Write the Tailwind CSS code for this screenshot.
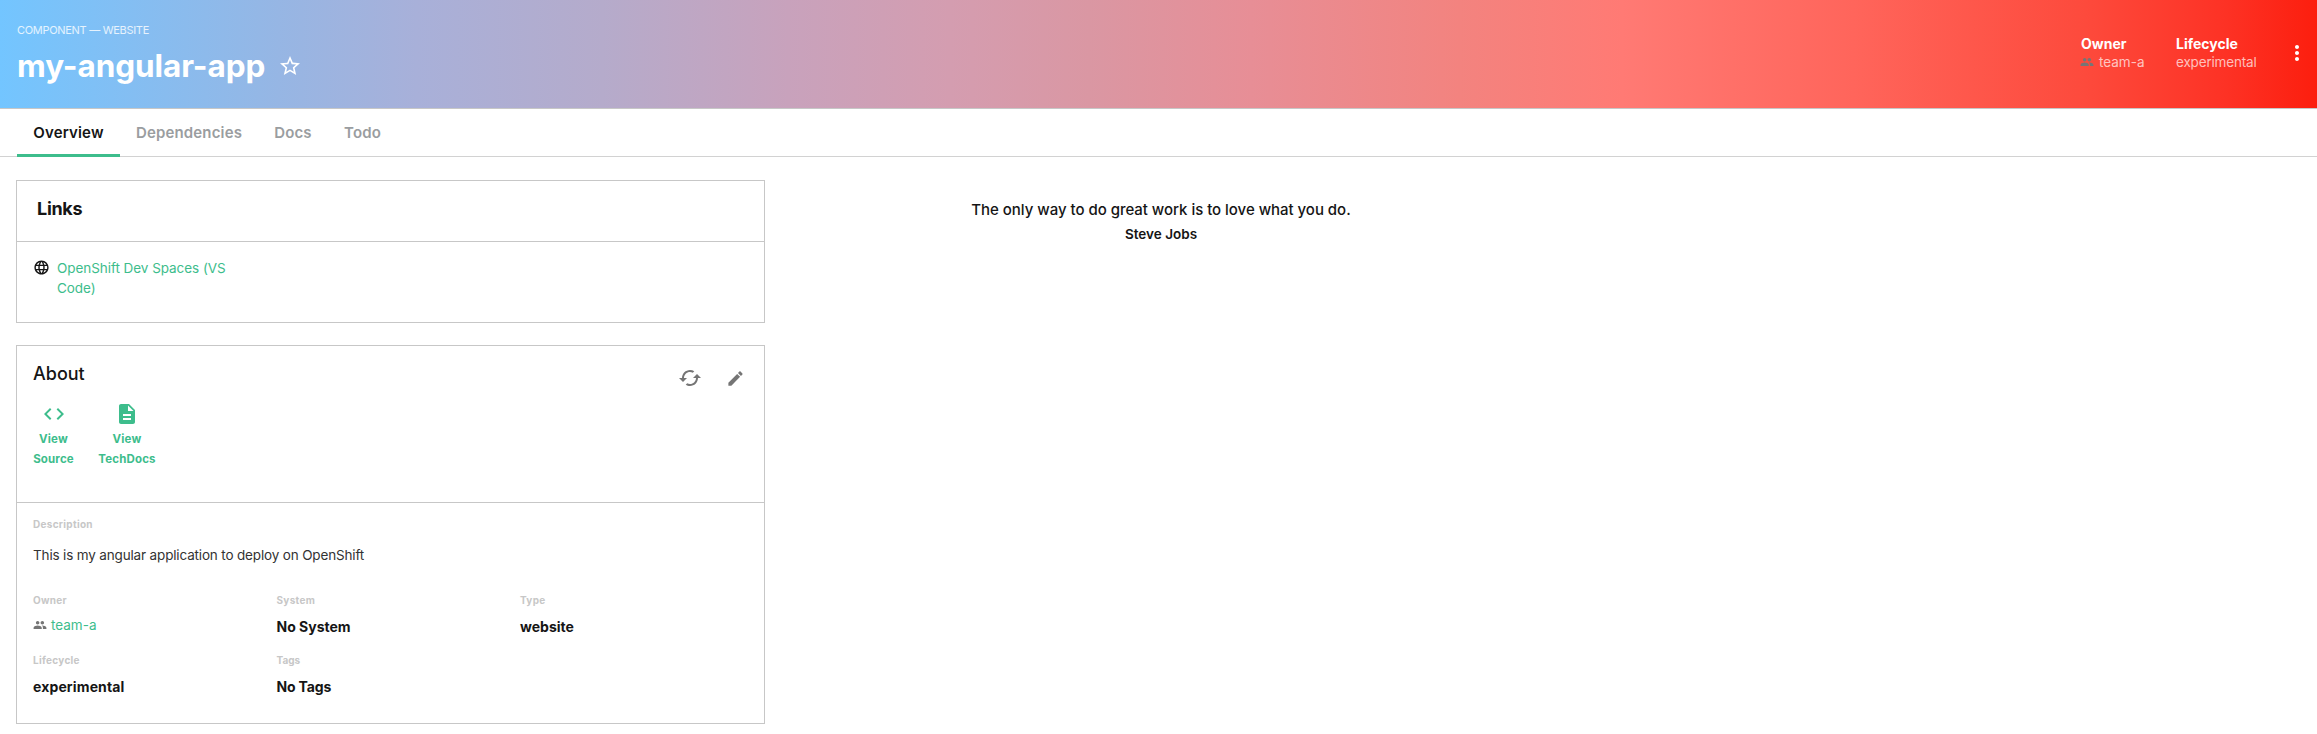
<!DOCTYPE html>
<html lang="en">
<head>
<meta charset="utf-8">
<title>my-angular-app</title>
<script src="https://cdn.jsdelivr.net/npm/@tailwindcss/browser@4"></script>
</head>
<body class="h-[734px] overflow-hidden bg-white font-['Inter',sans-serif] text-[14px] leading-5 text-[#151515]">
<header class="flex h-[109px] justify-between border-b border-[#c7c7c7] bg-[linear-gradient(90deg,#73c5ff_0%,#96b6e4_12%,#a8b0d9_18%,#b5abcb_26%,#c8a2bc_34%,#d49db0_41%,#da97a3_47%,#e78e96_54%,#f3837f_63%,#ff7a74_70%,#ff655b_80%,#fd4a3c_90%,#fd3225_96%,#fc1e0e_100%)] text-white">
  <div class="pt-5 pl-4">
    <p class="pl-px text-[11px] tracking-[-0.3px] text-white/80">COMPONENT — WEBSITE</p>
    <div class="mt-1.5 flex h-10 items-center">
      <h1 class="pl-px text-[31.5px] leading-10 font-bold tracking-[-0.08px]">my-angular-app</h1>
      <svg class="ml-[12.5px] size-6" viewBox="0 0 24 24" fill="currentColor"><path d="M22 9.240l-7.190-.62L12 2 9.190 8.630 2 9.240l5.460 4.730L5.820 21 12 17.270 18.180 21l-1.630-7.030L22 9.240zM12 15.400l-3.760 2.270 1-4.280-3.320-2.880 4.380-.38L12 6.100l1.710 4.040 4.380.38-3.320 2.880 1 4.280L12 15.400z"/></svg>
    </div>
  </div>
  <div class="flex pt-[34px] pr-2">
    <div class="w-24">
      <p class="h-[18px] pl-px leading-[19px] font-bold">Owner</p>
      <p class="flex items-center text-[13.5px] text-white/70"><svg class="mr-[5px] size-[14px] text-[#757575]" viewBox="0 0 24 24" fill="currentColor"><path d="M16 11c1.660 0 2.990-1.340 2.990-3S17.660 5 16 5c-1.660 0-3 1.340-3 3s1.340 3 3 3zm-8 0c1.660 0 2.990-1.340 2.990-3S9.660 5 8 5C6.340 5 5 6.340 5 8s1.340 3 3 3zm0 2c-2.330 0-7 1.170-7 3.500V19h14v-2.500c0-2.330-4.670-3.500-7-3.500zm8 0c-.29 0-.62.02-.97.05 1.160.84 1.970 1.970 1.970 3.450V19h6v-2.500c0-2.330-4.670-3.500-7-3.500z"/></svg>team-a</p>
    </div>
    <div class="w-[109px]">
      <p class="h-[18px] font-bold">Lifecycle</p>
      <p class="text-[13.5px] tracking-[-0.17px] text-white/70">experimental</p>
    </div>
    <svg class="mt-[7px] size-6" viewBox="0 0 24 24" fill="currentColor"><path d="M12 8c1.100 0 2-.9 2-2s-.9-2-2-2-2 .9-2 2 .9 2 2 2zm0 2c-1.100 0-2 .9-2 2s.9 2 2 2 2-.9 2-2-.9-2-2-2zm0 6c-1.100 0-2 .9-2 2s.9 2 2 2 2-.9 2-2-.9-2-2-2z"/></svg>
  </div>
</header>
<nav class="flex h-12 items-start border-b border-[#d2d2d2] pl-[17px] text-[15px] font-semibold tracking-[0.15px] text-[#9a9da0]">
  <a class="flex h-12 w-[103px] items-center justify-center border-b-[3px] border-[#3dbd8c] pt-[3px] text-[#151515]">Overview</a>
  <a class="flex h-[45px] w-[138px] items-center justify-center pt-[3px]">Dependencies</a>
  <a class="flex h-[45px] w-[70px] items-center justify-center pt-[3px]">Docs</a>
  <a class="flex h-[45px] w-[69px] items-center justify-center pt-[3px]">Todo</a>
</nav>
<main class="flex gap-4 pt-[23px] pl-4">
  <div class="flex w-[749px] flex-col gap-[22px]">
    <section class="h-[143px] border border-[#c7c7c7]">
      <div class="h-[61px] border-b border-[#c7c7c7] pt-[15px] pl-5">
        <h2 class="text-[18px] leading-[25px] font-bold tracking-[-0.3px]">Links</h2>
      </div>
      <div class="flex pt-4 pl-[15.5px]">
        <svg class="mt-[0.7px] mr-[7.5px] size-[17px]" viewBox="0 0 24 24" fill="currentColor"><path d="M11.990 2C6.470 2 2 6.480 2 12s4.470 10 9.990 10C17.520 22 22 17.520 22 12S17.520 2 11.990 2zm6.930 6h-2.950c-.32-1.250-.78-2.450-1.380-3.560 1.840.63 3.370 1.910 4.330 3.560zM12 4.040c.83 1.200 1.480 2.530 1.910 3.960h-3.820c.43-1.430 1.080-2.760 1.910-3.960zM4.260 14C4.100 13.360 4 12.690 4 12s.1-1.360.26-2h3.380c-.08.66-.14 1.320-.14 2s.06 1.340.14 2H4.260zm.82 2h2.950c.32 1.250.78 2.450 1.380 3.560-1.840-.63-3.370-1.900-4.330-3.560zm2.950-8H5.080c.96-1.660 2.490-2.930 4.330-3.560C8.810 5.550 8.350 6.750 8.030 8zM12 19.960c-.83-1.200-1.480-2.530-1.910-3.960h3.820c-.43 1.430-1.080 2.760-1.910 3.960zM14.340 14H9.660c-.09-.66-.16-1.320-.16-2s.07-1.350.16-2h4.680c.09.65.16 1.320.16 2s-.07 1.340-.16 2zm.25 5.560c.6-1.110 1.060-2.310 1.380-3.560h2.950c-.96 1.650-2.490 2.930-4.330 3.560zM16.360 14c.08-.66.14-1.320.14-2s-.06-1.340-.14-2h3.380c.16.64.26 1.310.26 2s-.1 1.360-.26 2h-3.380z"/></svg>
        <a class="w-[180px] text-[13.5px] tracking-[-0.05px] text-[#3dbd8c]">OpenShift Dev Spaces (VS Code)</a>
      </div>
    </section>
    <section class="h-[379px] border border-[#c7c7c7]">
      <div class="h-[157px] border-b border-[#c7c7c7] pl-4">
        <div class="flex h-10 justify-between pr-[17px]">
          <h2 class="pt-4 text-[18px] leading-6 font-medium">About</h2>
          <div class="flex gap-[21px] pt-5 text-[#757575]">
            <svg class="size-6 shrink-0" viewBox="0 0 24 24" fill="currentColor"><path d="M19 8l-4 4h3c0 3.310-2.690 6-6 6-1.010 0-1.970-.25-2.800-.7l-1.460 1.460C8.970 19.540 10.430 20 12 20c4.420 0 8-3.580 8-8h3l-4-4zM6 12c0-3.310 2.690-6 6-6 1.010 0 1.970.25 2.800.7l1.460-1.460C15.030 4.460 13.570 4 12 4c-4.420 0-8 3.580-8 8H1l4 4 4-4H6z"/></svg>
            <svg class="m-[2.5px] size-[19px] shrink-0" viewBox="0 0 24 24" fill="currentColor"><path d="M3 17.250V21h3.750L17.810 9.940l-3.750-3.750L3 17.250zM20.710 7.040c.39-.39.39-1.020 0-1.410l-2.340-2.340c-.39-.39-1.020-.39-1.410 0l-1.830 1.830 3.750 3.750 1.830-1.830z"/></svg>
          </div>
        </div>
        <div class="mt-4 flex gap-6 text-center text-[11.5px] leading-5 font-bold tracking-[0.15px] text-[#3dbd8c]">
          <a class="flex w-[41px] flex-col items-center gap-[3px]">
            <svg class="size-6" viewBox="0 0 24 24" fill="currentColor"><path d="M9.400 16.600L4.800 12l4.600-4.600L8 6l-6 6 6 6 1.400-1.400zm5.200 0l4.600-4.600-4.600-4.600L16 6l6 6-6 6-1.400-1.400z"/></svg>
            <span>View<br>Source</span>
          </a>
          <a class="flex w-[58px] flex-col items-center gap-[3px]">
            <svg class="size-6" viewBox="0 0 24 24" fill="currentColor"><path d="M14 2H6c-1.100 0-1.990.9-1.990 2L4 20c0 1.100.89 2 1.990 2H18c1.100 0 2-.9 2-2V8l-6-6zm2 16H8v-2h8v2zm0-4H8v-2h8v2zm-3-5V3.500L18.500 9H13z"/></svg>
            <span>View<br>TechDocs</span>
          </a>
        </div>
      </div>
      <div class="pt-[15px] pl-4">
        <h3 class="text-[10px] leading-[13px] font-bold tracking-[0.3px] text-[#c7c7c7]">Description</h3>
        <p class="mt-3.5 text-[13.5px] tracking-[-0.16px] text-[#333]">This is my angular application to deploy on OpenShift</p>
        <div class="mt-[29px] grid grid-cols-[243.5px_243.5px_200px] gap-y-[17px]">
          <div>
            <h3 class="text-[10px] leading-[13px] font-bold tracking-[0.3px] text-[#c7c7c7]">Owner</h3>
            <p class="mt-2 flex items-center text-[13.5px] text-[#3dbd8c]"><svg class="mr-1 size-[14px] text-[#757575]" viewBox="0 0 24 24" fill="currentColor"><path d="M16 11c1.660 0 2.990-1.340 2.990-3S17.660 5 16 5c-1.660 0-3 1.340-3 3s1.340 3 3 3zm-8 0c1.660 0 2.990-1.340 2.990-3S9.660 5 8 5C6.340 5 5 6.340 5 8s1.340 3 3 3zm0 2c-2.330 0-7 1.170-7 3.500V19h14v-2.500c0-2.330-4.670-3.500-7-3.500zm8 0c-.29 0-.62.02-.97.05 1.160.84 1.970 1.970 1.970 3.450V19h6v-2.500c0-2.330-4.670-3.500-7-3.500z"/></svg>team-a</p>
          </div>
          <div>
            <h3 class="text-[10px] leading-[13px] font-bold tracking-[0.3px] text-[#c7c7c7]">System</h3>
            <p class="mt-2.5 font-bold">No System</p>
          </div>
          <div>
            <h3 class="text-[10px] leading-[13px] font-bold tracking-[0.3px] text-[#c7c7c7]">Type</h3>
            <p class="mt-2.5 font-bold">website</p>
          </div>
          <div>
            <h3 class="text-[10px] leading-[13px] font-bold tracking-[0.3px] text-[#c7c7c7]">Lifecycle</h3>
            <p class="mt-2.5 font-bold tracking-[0.13px]">experimental</p>
          </div>
          <div>
            <h3 class="text-[10px] leading-[13px] font-bold text-[#c7c7c7]">Tags</h3>
            <p class="mt-2.5 font-bold tracking-[-0.15px]">No Tags</p>
          </div>
        </div>
      </div>
    </section>
  </div>
  <section class="flex w-[760px] flex-col items-center pt-[18px]">
    <p class="text-[15px] leading-6 font-medium tracking-[-0.03px]">The only way to do great work is to love what you do.</p>
    <p class="mt-0.5 text-[13.5px] font-semibold">Steve Jobs</p>
  </section>
</main>
</body>
</html>
